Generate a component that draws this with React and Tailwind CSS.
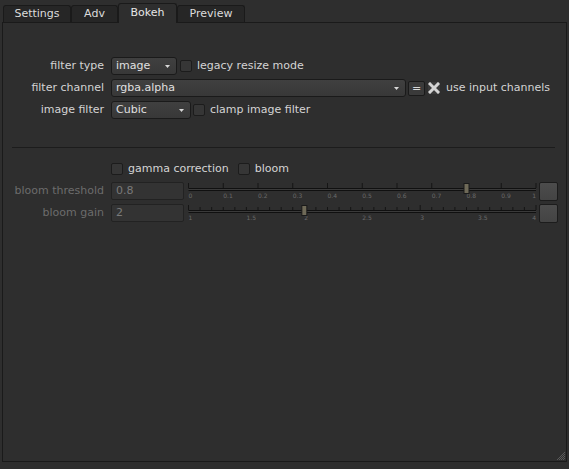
import React from "react";

const font = { fontFamily: '"DejaVu Sans", Verdana, sans-serif' };

function Tab({ label, active, width }) {
  if (active) {
    return (
      <div
        className={`relative z-10 -mb-px flex h-[20px] items-center justify-center rounded-t-[3px] border border-b-0 border-[#1a1a1a] bg-[#2e2e2e] pb-[1px] text-[11px] text-[#e6e6e6] ${width}`}
      >
        {label}
      </div>
    );
  }
  return (
    <div
      className={`flex h-[17px] items-center justify-center rounded-t-[3px] border border-b-0 border-[#1a1a1a] bg-[#262626] pt-[1px] text-[11px] text-[#dcdcdc] ${width}`}
    >
      {label}
    </div>
  );
}

function Arrow() {
  return (
    <svg width="5" height="3" viewBox="0 0 5 3" className="shrink-0">
      <path d="M0 0 L5 0 L2.5 3 Z" fill="#d8d8d8" />
    </svg>
  );
}

function Dropdown({ value, width }) {
  return (
    <div
      className={`flex h-[18px] items-center justify-between rounded-[3px] border border-[#1a1a1a] bg-gradient-to-b from-[#404040] to-[#383838] pl-[4px] pr-[6px] text-[11px] text-[#e0e0e0] ${width}`}
    >
      <span>{value}</span>
      <Arrow />
    </div>
  );
}

function Check({ label, className = "" }) {
  return (
    <div className={`flex items-center ${className}`}>
      <div className="h-[12px] w-[12px] rounded-[2px] border border-[#1c1c1c] bg-[#363636]" />
      {label && <span className="ml-[5px] text-[11px] text-[#d4d4d4]">{label}</span>}
    </div>
  );
}

function Row({ label, dim, children, className = "h-[18px]" }) {
  return (
    <div className={`flex items-center ${className}`}>
      <div
        className={`w-[101px] shrink-0 text-right text-[11px] ${dim ? "text-[#6c6c6c]" : "text-[#d4d4d4]"}`}
      >
        {label}
      </div>
      <div className="ml-[7px] flex items-center">{children}</div>
    </div>
  );
}

function Slider({ min, max, value, step, major, labels }) {
  const x0 = 2.5;
  const span = 347.5;
  const px = (v) => x0 + ((v - min) / (max - min)) * span;
  const ticks = [];
  const n = Math.round((max - min) / step);
  for (let i = 0; i <= n; i++) {
    const v = min + i * step;
    const isMajor = Math.abs(v / major - Math.round(v / major)) < 1e-6;
    ticks.push(
      <line
        key={i}
        x1={px(v)}
        x2={px(v)}
        y1={isMajor ? 2 : 4}
        y2={7}
        stroke="#151515"
        strokeWidth="1"
      />
    );
  }
  const hx = px(value);
  return (
    <svg width="352" height="20" viewBox="0 0 352 20" className="ml-[2px] shrink-0">
      {ticks}
      <rect x={x0} y="7" width={span} height="1" fill="#101010" />
      <rect x={x0} y="8" width={span} height="1" fill="#3a3a3a" />
      <rect x={x0} y="9" width={span} height="1" fill="#101010" />
      {labels.map((l, i) => (
        <text
          key={l}
          x={px(Number(l))}
          y="17"
          fontSize="6"
          fill="#6a6a6a"
          fontFamily='"DejaVu Sans", sans-serif'
          textAnchor={i === labels.length - 1 ? "end" : "start"}
        >
          {l}
        </text>
      ))}
      <rect x={hx - 2.5} y="2.5" width="5" height="10" fill="#6f6a58" stroke="#1a1a1a" />
    </svg>
  );
}

function SquareButton() {
  return (
    <div className="ml-[1px] h-[19px] w-[19px] shrink-0 rounded-[2px] border border-[#1c1c1c] bg-gradient-to-b from-[#4c4c4c] to-[#444444]" />
  );
}

export default function App() {
  return (
    <div className="flex h-[469px] w-[569px] flex-col bg-[#2e2e2e]" style={font}>
      {/* tabs */}
      <div className="flex h-[22px] items-end pl-[3px]">
        <Tab label="Settings" width="w-[68px]" />
        <Tab label="Adv" width="w-[47px]" />
        <Tab label="Bokeh" width="w-[59px]" active />
        <Tab label="Preview" width="w-[68px]" />
      </div>

      {/* panel */}
      <div className="relative mx-[2px] h-[440px] border border-[#1a1a1a] bg-[#2e2e2e] pt-[34px]">
        <div className="flex flex-col gap-[4px]">
          <Row label="filter type">
            <Dropdown value="image" width="w-[66px]" />
            <Check label="legacy resize mode" className="ml-[3px]" />
          </Row>
          <Row label="filter channel">
            <Dropdown value="rgba.alpha" width="w-[295px]" />
            <div className="ml-[2px] flex h-[15px] w-[17px] items-center justify-center rounded-[2px] border border-[#1a1a1a] bg-[#3a3a3a] text-[11px] leading-none text-[#d8d8d8]">
              =
            </div>
            <div className="ml-[3px] flex h-[12px] w-[12px] items-center justify-center rounded-[1px] bg-[#3a3a3a]">
              <svg width="12" height="12" viewBox="0 0 12 12">
                <path d="M2 2 L10 10 M10 2 L2 10" stroke="#d4d4d4" strokeWidth="3" strokeLinecap="square" />
              </svg>
            </div>
            <span className="ml-[6px] text-[11px] text-[#d4d4d4]">use input channels</span>
          </Row>
          <Row label="image filter">
            <Dropdown value="Cubic" width="w-[80px]" />
            <Check label="clamp image filter" className="ml-[2px]" />
          </Row>
        </div>

        <div className="ml-[9px] mt-[28px] w-[543px] border-t border-[#1c1c1c]" />

        <div className="mt-[12px] flex flex-col">
          <Row label="">
            <Check label="gamma correction" />
            <Check label="bloom" className="ml-[9px]" />
          </Row>
          <Row label="bloom threshold" dim className="mt-[3px] h-[20px]">
            <div className="flex h-[18px] w-[73px] items-center rounded-[2px] border border-[#222222] bg-[#333333] pl-[4px] text-[11px] text-[#7a7a7a]">
              0.8
            </div>
            <Slider
              min={0}
              max={1}
              value={0.8}
              step={0.1}
              major={0.1}
              labels={["0", "0.1", "0.2", "0.3", "0.4", "0.5", "0.6", "0.7", "0.8", "0.9", "1"]}
            />
            <SquareButton />
          </Row>
          <Row label="bloom gain" dim className="mt-[2px] h-[20px]">
            <div className="flex h-[18px] w-[73px] items-center rounded-[2px] border border-[#222222] bg-[#333333] pl-[4px] text-[11px] text-[#7a7a7a]">
              2
            </div>
            <Slider
              min={1}
              max={4}
              value={2}
              step={0.1}
              major={1}
              labels={["1", "1.5", "2", "2.5", "3", "3.5", "4"]}
            />
            <SquareButton />
          </Row>
        </div>

        {/* resize grip */}
        <svg width="8" height="8" viewBox="0 0 8 8" className="absolute bottom-[1px] right-[1px]">
          {[...Array(8)].map((_, y) =>
            [...Array(8)].map((_, x) =>
              x + y >= 7 && (x + y) % 2 === 1 ? (
                <rect key={`${x}-${y}`} x={x} y={y} width="1" height="1" fill="#5a5a5a" />
              ) : null
            )
          )}
        </svg>
      </div>
    </div>
  );
}
